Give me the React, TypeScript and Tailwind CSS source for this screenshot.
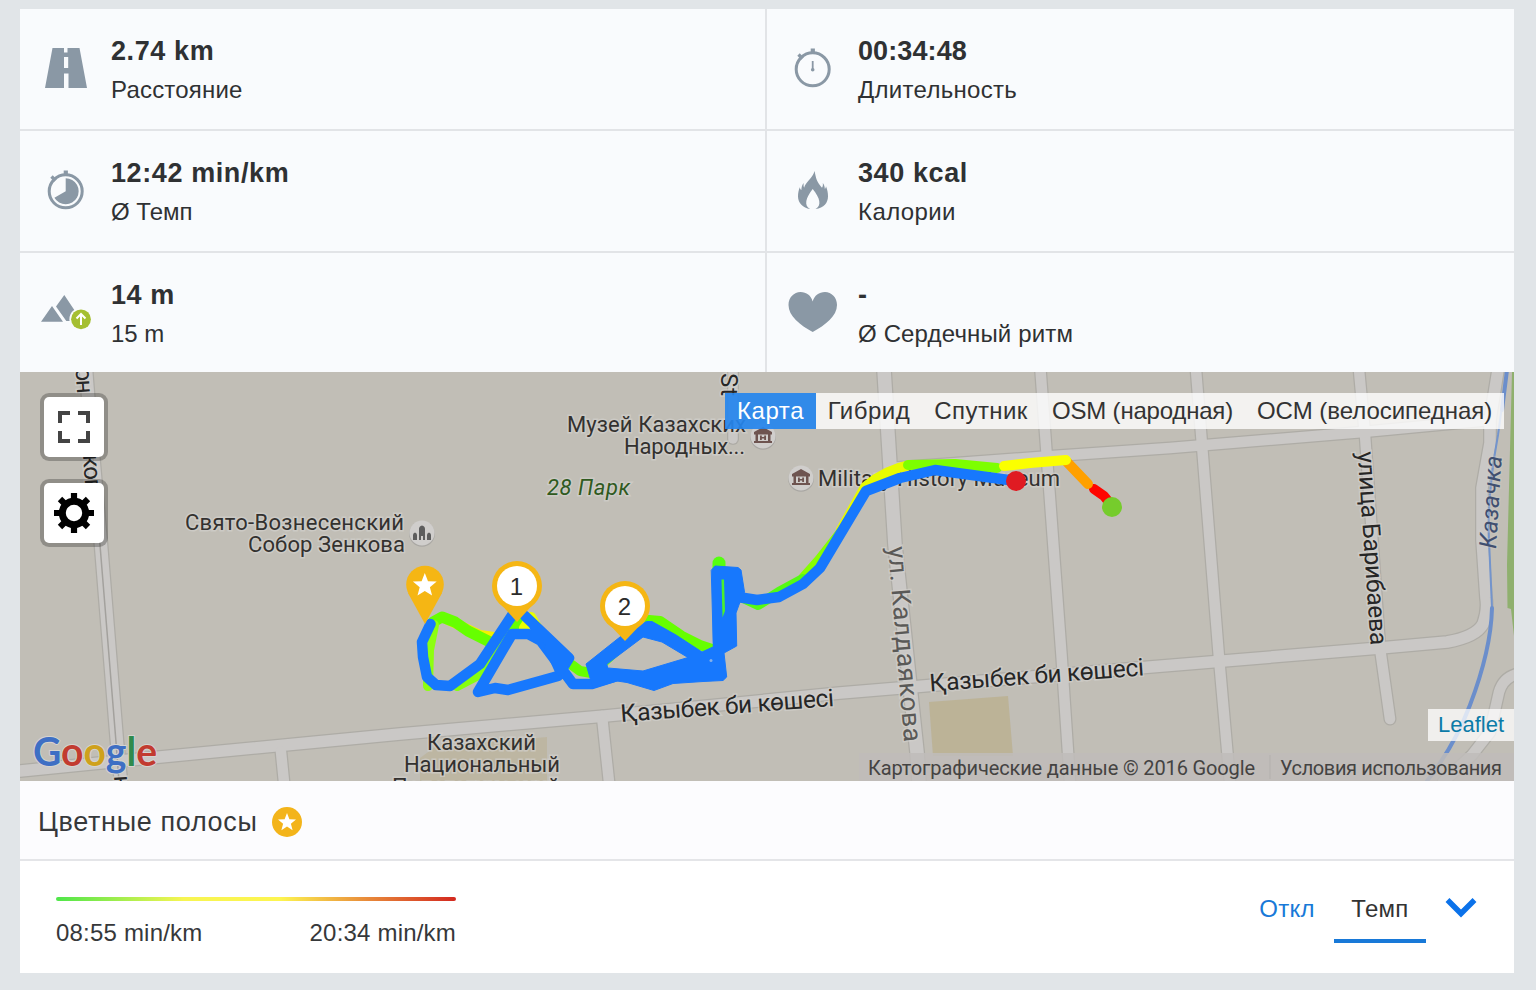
import type { ReactNode } from "react";

const SANS = "font-['Liberation_Sans',Arial,sans-serif]";
const ICON = "#8a98a5";

function starPoints(cx: number, cy: number, r: number) {
  const pts: string[] = [];
  for (let i = 0; i < 10; i++) {
    const radius = i % 2 === 0 ? r : r * 0.43;
    const a = (Math.PI / 5) * i - Math.PI / 2;
    pts.push(`${(cx + radius * Math.cos(a)).toFixed(1)},${(cy + radius * Math.sin(a)).toFixed(1)}`);
  }
  return pts.join(" ");
}

/* Every stat icon is drawn on a 91x119 canvas, the width of the icon column */
function IconBox({ children }: { children: ReactNode }) {
  return (
    <svg className="h-[119px] w-[91px] shrink-0" viewBox="0 0 91 119" fill="none">
      {children}
    </svg>
  );
}

function RoadIcon() {
  return (
    <IconBox>
      <path
        fill={ICON}
        d="M32.5 39H44v4.500h3.500V39H59.500L67 79H48.500V64.500H44V79H25zM44 48v11h4.200V48z"
        fillRule="evenodd"
      />
    </IconBox>
  );
}

function StopwatchBody() {
  return (
    <>
      <circle cx="45.700" cy="60.300" r="16.500" stroke={ICON} strokeWidth="3" />
      <rect x="43.700" y="39.500" width="4.200" height="5" fill={ICON} />
      <path d="M31.500 45.500l4 4" stroke={ICON} strokeWidth="3.400" />
    </>
  );
}

function DurationIcon() {
  return (
    <IconBox>
      <StopwatchBody />
      <path d="M45.700 52v9" stroke={ICON} strokeWidth="1.800" />
      <circle cx="45.700" cy="60.700" r="1.800" fill={ICON} />
    </IconBox>
  );
}

function PaceIcon() {
  return (
    <IconBox>
      <StopwatchBody />
      <path fill={ICON} d="M45.700 60.300V47.300a13 13 0 1 1-11.300 19.500z" />
    </IconBox>
  );
}

function FlameIcon() {
  return (
    <IconBox>
      <path
        fill={ICON}
        d="M47.500 40c1.200 5 1.500 8.500 4.500 13 1 1.500 2 2.500 3 3.800.8-1.300 1.100-2.800.8-4.800 1.700 2.200 1.800 3.800 2.100 6 .7-.6 1-1.500 1.100-2.700 1.500 4 2 6.500 2 10 0 6.500-4 11.800-12.500 12.700 6.500-3.500 4.500-11-2.800-20-7 9-9 16.500-2.600 20C36 77 31 72 31 65.500c0-3.300.6-6.300 1.800-9.200.2 1.300.7 2.300 1.500 3 .3-3 .4-4.800 2.300-7.200 0 2-.2 3.300.5 4.600C38 52 46 46.500 47.500 40z"
      />
    </IconBox>
  );
}

function ElevationIcon() {
  return (
    <IconBox>
      <path fill={ICON} d="M21 68.700L32 53l11 15.700zM36 53.500L44.300 42L55 58l-4 10H46.300z" />
      <circle cx="61" cy="66.300" r="11.600" fill="#f9fbfd" />
      <circle cx="61" cy="66.300" r="9.900" fill="#a5bf32" />
      <path d="M61 72v-10.500M56.500 65.500l4.500-4.500 4.500 4.500" stroke="#fff" strokeWidth="2" />
    </IconBox>
  );
}

function HeartIcon() {
  return (
    <IconBox>
      <path
        fill={ICON}
        d="M45.700 79C33 72 21.500 63 21.500 52c0-7.500 5.500-13 12-13 6 0 10.500 3.500 12.200 9.500C47.400 42.500 52 39 58 39c6.500 0 12 5.500 12 13 0 11-11.600 20-24.300 27z"
      />
    </IconBox>
  );
}

const stats = [
  { icon: <RoadIcon />, value: "2.74 km", label: "Расстояние", vt: "tracking-[0.6px]", lt: "tracking-[0.2px]" },
  { icon: <DurationIcon />, value: "00:34:48", label: "Длительность", vt: "tracking-[0.1px]", lt: "tracking-[0.3px]" },
  { icon: <PaceIcon />, value: "12:42 min/km", label: "Ø Темп", vt: "tracking-[0.6px]", lt: "" },
  { icon: <FlameIcon />, value: "340 kcal", label: "Калории", vt: "tracking-[0.6px]", lt: "tracking-[0.4px]" },
  { icon: <ElevationIcon />, value: "14 m", label: "15 m", vt: "tracking-[0.6px]", lt: "" },
  { icon: <HeartIcon />, value: "-", label: "Ø Сердечный ритм", vt: "", lt: "tracking-[0.15px]" },
];

function StatGrid() {
  return (
    <div className="grid h-[363px] grid-cols-[745px_747px] grid-rows-[120px_120px_119px] gap-[2px] bg-[#e2e4e7]">
      {stats.map((s) => (
        <div key={s.label} className="flex bg-[#f9fbfd]">
          {s.icon}
          <div className="pt-[22px] text-[#2f3133]">
            <div className={`whitespace-nowrap text-[27px] font-bold leading-[40px] ${s.vt}`}>{s.value}</div>
            <div className={`whitespace-nowrap text-[24px] leading-[38px] ${s.lt}`}>{s.label}</div>
          </div>
        </div>
      ))}
    </div>
  );
}

const roads = [
  { d: "M20 771L160 757L400 734L605 716L840 693L900 688L1150 667L1380 648L1447 642Q1476 637 1483 624Q1488 610 1486 598L1482 540V488L1490 443L1490 420L1498 370", w: 12 },
  { d: "M86 370L90 420L101 545L117 742L121 782", w: 13 },
  { d: "M281 752L284 782", w: 11 },
  { d: "M602 716L609 782", w: 11 },
  { d: "M884 370L895 545L917 752L919 782", w: 14 },
  { d: "M1040.500 370L1046.500 452L1061.500 655L1070 782", w: 11 },
  { d: "M1196 370L1202 445L1219 658L1230 782", w: 11 },
  { d: "M1359 370L1365 435L1380 648L1390 719", w: 11 },
  { d: "M890 468L1053 456L1170 448L1363 432L1490 420", w: 11 },
  { d: "M733 370V439", w: 10 },
  { d: "M1517 674Q1503 678 1499 692L1490 732L1472 755L1443 782", w: 11 },
];

const labels = [
  { t: "Музей Казахских", x: 567, y: 432, len: 179 },
  { t: "Народных...", x: 624, y: 454, len: 121 },
  { t: "Свято-Вознесенский", x: 185, y: 530, len: 219 },
  { t: "Собор Зенкова", x: 248, y: 552, len: 157 },
  { t: "Military History Museum", x: 818, y: 486, len: 242 },
  { t: "Казахский", x: 427, y: 750, len: 109 },
  { t: "Национальный", x: 404, y: 772, len: 156 },
  { t: "Педагогический", x: 392, y: 794, len: 168 },
];

const streets = [
  { t: "Қазыбек би көшесі", x: 621, y: 722, a: -4.3, len: 214, size: 24.5, fill: "#262626" },
  { t: "Қазыбек би көшесі", x: 930, y: 691.5, a: -4.3, len: 215, size: 24.5, fill: "#262626" },
  { t: "ул. Калдаякова", x: 888, y: 547, a: 85.3, len: 196, size: 26, fill: "#5a5957" },
  { t: "улица Барибаева", x: 1357.5, y: 452, a: 86.1, len: 194, size: 24.5, fill: "#262626" },
  { t: "St", x: 720.5, y: 373, a: 90, len: 23, size: 24, fill: "#262626" },
  { t: "он", x: 75.5, y: 368, a: 86, len: 26, size: 24, fill: "#262626" },
  { t: "ков", x: 83, y: 455, a: 86, len: 38, size: 24, fill: "#262626" },
  { t: "к", x: 114, y: 776, a: 86, len: 12, size: 24, fill: "#262626" },
];

function MuseumBadge({ x, y }: { x: number; y: number }) {
  return (
    <g transform={`translate(${x} ${y})`}>
      <circle cy="1" r="12.800" fill="#a9a7a3" />
      <circle r="12.500" fill="#d0cecc" />
      <path
        fill="#6e5450"
        fillRule="evenodd"
        d="M0-9L9-4v2.500H7.500V5H9v2H-9V5h1.500v-6.500H-9V-4zM-5-1.500V5H5v-6.500zM-3-.5h1.800v1.500h2.400V-.5H3v4.500H1.200V2.500h-2.400V4H-3z"
      />
    </g>
  );
}

function KmPin({ x, y, tip, n }: { x: number; y: number; tip: number; n: string }) {
  return (
    <g>
      <circle cx={x} cy={y} r="25" fill="#f5b614" />
      <path d={`M${x - 20} ${y + 14}L${x} ${tip}L${x + 20} ${y + 14}z`} fill="#f5b614" />
      <circle cx={x} cy={y} r="20" fill="#fff" />
      <text x={x - 0.5} y={y + 9} fontSize="24" textAnchor="middle" fill="#2b2b2b" fontFamily="Liberation Sans, Arial, sans-serif">
        {n}
      </text>
    </g>
  );
}

function Track() {
  return (
    <g fill="none" strokeWidth="10" strokeLinecap="round" strokeLinejoin="round">
      {/* pace coloured segments */}
      <path d="M1112 506L1104 496L1094 489" stroke="#ff0500" />
      <path d="M1088 484L1066 461" stroke="#ffa000" />
      <path d="M910 465Q885 470 865 487L841 530" stroke="#e8fb00" />
      <path d="M841 532L819 560L803 578" stroke="#86ff00" />
      <path d="M803 579L779 592L758 605L741 597" stroke="#55fb14" />
      <path d="M908 465L955 464L997 468" stroke="#7dff00" />
      <path d="M1004 466L1030 463L1066 460" stroke="#fbff00" />
      <path d="M448 620L480 635L494 637" stroke="#f4f000" />
      <path d="M433 622L442 617L455 622L468 631L490 642" stroke="#66ff00" strokeWidth="11" />
      <path d="M434 625L429 650L428 686" stroke="#8dff10" />
      <path d="M457 686L478 675L505 636" stroke="#86ff10" />
      <path d="M512 629L520 620" stroke="#66ff00" />
      <path d="M524 628L531 617L546 642" stroke="#eaff00" />
      <path d="M572 665L580 671L597 674" stroke="#66ff00" />
      <path d="M649 620L660 621L682 636L700 645L712 649" stroke="#66ff00" />
      <path d="M719 563V600" stroke="#55ff10" strokeWidth="13" />
      <path d="M606 664L630 642" stroke="#66ff00" strokeWidth="4" />
      {/* return leg */}
      <g stroke="#1778fd" strokeWidth="10.500">
        <path d="M1016 481L935 470L900 478L866 491L820 568L803 584L779 597L757 600L738 597" />
        <path d="M430.500 624L422 642L423 657L427 677L436 685L450 686L480 664L513 614" />
        <path d="M525 616L569 658L558 676L508 690L495 688L478 692L512 634L528 634L541 641L573 684L592 684L617 676" />
        <path d="M535 627L566 657L560 670L550 648" strokeWidth="11" />
      </g>
      <path
        fill="#1778fd"
        stroke="#1778fd"
        strokeWidth="1"
        fillRule="evenodd"
        d="M711.500 570L715 566L738 567.500L741 570L744.500 592L740 602L736 613L736.700 646L724 653L726.700 677L723 680.500L703 681.500L673 683.500L654 690.500L627 682.500L617 681L593 688L586 664L620 637L646.500 621.500L652 621.500L676 635L702 652L713 647zM607 664L643 637L662 642L688 657.500L643 671L608 668z"
      />
      <path d="M721.500 579.500L724 579.500L725 611L722.500 617.500z" fill="#4cf02c" />
      <circle cx="711" cy="660.500" r="1.500" fill="#83b0ea" />
    </g>
  );
}

function MapCanvas() {
  return (
    <svg className="block h-full w-full" viewBox="20 372 1494 409">
      <rect x="20" y="372" width="1494" height="409" fill="#c1beb6" />
      <path d="M929 702L1008 696L1013 756H933z" fill="#bbb194" fillOpacity="0.900" />
      <path d="M420 758L435 747L547 737V782H420z" fill="#bbb194" fillOpacity="0.600" />
      <path d="M1512 372L1507 565L1507.500 608L1511 609L1514 636V372z" fill="#8fb06e" />

      <g fill="none" strokeLinecap="round" strokeLinejoin="round">
        {roads.map((r) => (
          <path key={r.d} d={r.d} stroke="#aeaca6" strokeWidth={r.w + 2} />
        ))}
        {roads.map((r) => (
          <path key={r.d} d={r.d} stroke="#cac8c6" strokeWidth={r.w - 0.5} />
        ))}
        <path d="M90 420L100 545L116 742L119 782" stroke="#a3a19d" strokeWidth="1.500" />
        <path d="M1507 370L1498 435Q1487 495 1489 540L1492 608" stroke="#7394cc" strokeWidth="2" />
        <path d="M1507 370L1502 410M1492 608Q1491 650 1470 705Q1455 745 1427 781" stroke="#6b8ecb" strokeWidth="4" />
      </g>

      <MuseumBadge x={763} y={436} />
      <MuseumBadge x={801} y={478} />
      <circle cx="422" cy="534" r="12.800" fill="#a9a7a3" />
      <circle cx="422" cy="533" r="12.500" fill="#d0cecc" />
      <path
        fill="#5d5d5d"
        d="M419 540v-11q0-3 3-3.500q3 .5 3 3.500v11h-2v-4h-2v4zM413 540v-5q0-2 2-2.500q2 .5 2 2.500v5zM427 540v-5q0-2 2-2.500q2 .5 2 2.500v5z"
      />

      <g fontFamily="Roboto, sans-serif" fontSize="22" fill="#33312f" stroke="#d2d0cc" strokeWidth="3" strokeOpacity="0.700" paintOrder="stroke">
        {labels.map((l) => (
          <text key={l.t} x={l.x} y={l.y} textLength={l.len}>
            {l.t}
          </text>
        ))}
        <text x="547" y="495" textLength="83" fontStyle="italic" fill="#2f5a20">
          28 Парк
        </text>
        {streets.map((s, i) => (
          <text key={i} fontSize={s.size} fill={s.fill} textLength={s.len} transform={`translate(${s.x} ${s.y}) rotate(${s.a})`}>
            {s.t}
          </text>
        ))}
        <text fontSize="24" fontStyle="italic" fill="#404f70" strokeOpacity="0.300" textLength="93" transform="translate(1496 549) rotate(-86.500)">
          Казачка
        </text>
      </g>

      <text
        x="33"
        y="766"
        textLength="124"
        lengthAdjust="spacingAndGlyphs"
        fontFamily="Lato, sans-serif"
        fontSize="41"
        fontWeight="700"
        stroke="#d6d4d0"
        strokeWidth="2"
        paintOrder="stroke"
      >
        <tspan fill="#3e6fc4">G</tspan>
        <tspan fill="#c23b30">o</tspan>
        <tspan fill="#cfa11c">o</tspan>
        <tspan fill="#3e6fc4">g</tspan>
        <tspan fill="#2f8a4c">l</tspan>
        <tspan fill="#c23b30">e</tspan>
      </text>

      <Track />
      <circle cx="1016" cy="481" r="10" fill="#e01b22" />
      <circle cx="1112" cy="507" r="10" fill="#76cc2c" />

      <circle cx="425" cy="584.500" r="18.800" fill="#f5b614" />
      <path d="M408 593L425 624L442 593z" fill="#f5b614" />
      <polygon points={starPoints(424.8, 585.5, 12.5)} fill="#fff" />
      <KmPin x={517} y={586} tip={622} n="1" />
      <KmPin x={625} y={606} tip={641} n="2" />

      <rect x="859" y="753" width="655" height="28" fill="#bfbcba" fillOpacity="0.850" />
      <path d="M1270 755V779" stroke="#b3b0ad" />
      <g fontFamily="Roboto, sans-serif" fontSize="20" fill="#444342">
        <text x="868" y="775" textLength="387">
          Картографические данные © 2016 Google
        </text>
        <text x="1280" y="775" textLength="222">
          Условия использования
        </text>
      </g>
    </svg>
  );
}

const layers = [
  { name: "Карта", cls: "w-[91px] bg-[#2585ee]/92 text-white tracking-[0.6px]" },
  { name: "Гибрид", cls: "w-[106px] bg-white/80 text-[#333] tracking-[0.5px]" },
  { name: "Спутник", cls: "w-[118px] bg-white/80 text-[#333] tracking-[0.4px]" },
  { name: "OSM (народная)", cls: "w-[205px] bg-white/80 text-[#333] tracking-[-0.2px]" },
  { name: "OCM (велосипедная)", cls: "w-[259px] bg-white/80 text-[#333] tracking-[-0.05px]" },
];

function MapPanel() {
  return (
    <div className="relative h-[409px] overflow-hidden bg-[#c1beb6]">
      <MapCanvas />

      <div className="absolute left-[20px] top-[21px] flex flex-col gap-[18px]">
        <button className="flex size-[68px] items-center justify-center rounded-[9px] border-4 border-black/25 bg-white bg-clip-padding">
          <svg className="size-8" viewBox="0 0 32 32" fill="none" stroke="#444" strokeWidth="4">
            <path d="M2 12V2h10M20 2h10v10M30 20v10H20M12 30H2V20" />
          </svg>
        </button>
        <button className="flex size-[68px] items-center justify-center rounded-[9px] border-4 border-black/25 bg-white bg-clip-padding">
          <svg className="size-10" viewBox="-20 -20 40 40" fill="none" stroke="#000">
            <circle r="11.700" strokeWidth="7" />
            <path d="M0-20V-13M0 20V13M-20 0H-13M20 0H13M-14-14L-10-10M14 14L10 10M14-14L10-10M-14 14L-10 10" strokeWidth="6.200" />
          </svg>
        </button>
      </div>

      <div className="absolute right-[10px] top-[21px] flex h-[36px] text-[24px] leading-[36px]">
        {layers.map((l) => (
          <div key={l.name} className={`whitespace-nowrap text-center ${l.cls}`}>
            {l.name}
          </div>
        ))}
      </div>

      <div className="absolute right-0 top-[337px] h-[32px] w-[86px] bg-white/75 pl-[10px] text-[22px] leading-[32px] text-[#0b7ba8]">
        Leaflet
      </div>
    </div>
  );
}

function LegendPanel() {
  return (
    <div>
      <div className="flex h-[80px] items-center border-b-2 border-[#e4e5e8] bg-[#fcfcfe] pl-[18px] pt-[4px]">
        <span className="w-[234px] whitespace-nowrap text-[27px] tracking-[0.65px] text-[#36383a]">Цветные полосы</span>
        <svg className="size-[30px]" viewBox="0 0 30 30">
          <circle cx="15" cy="15" r="15" fill="#f3b41a" />
          <polygon points={starPoints(15, 15.5, 9.5)} fill="#fff" />
        </svg>
      </div>

      <div className="flex h-[112px] justify-between bg-white pl-[36px] pr-[36px]">
        <div className="w-[400px] pt-[36px] text-[24px] text-[#36383a]">
          <div className="h-1 rounded-full bg-[linear-gradient(90deg,#4ee64a_0%,#f7f552_32%,#fdf550_56%,#e8893a_78%,#d3281f_100%)]" />
          <div className="mt-[14px] flex justify-between leading-[36px] tracking-[0.2px]">
            <span>08:55 min/km</span>
            <span>20:34 min/km</span>
          </div>
        </div>

        <div className="flex text-[24px] leading-[36px]">
          <button className="h-[82px] w-[94px] pt-[14px] tracking-[0.3px] text-[#1879d8]">Откл</button>
          <button className="h-[82px] w-[92px] border-b-4 border-[#1879d8] pt-[18px] tracking-[0.3px] text-[#333]">Темп</button>
          <svg className="ml-[19px] mr-px mt-[36px] h-[22px] w-[32px]" viewBox="0 0 32 22" fill="none">
            <path d="M2.500 3L16 16.500L29.500 3" stroke="#0b72ea" strokeWidth="5.500" />
          </svg>
        </div>
      </div>
    </div>
  );
}

export default function App() {
  return (
    <div className={`h-[990px] w-[1536px] overflow-hidden bg-[#e1e5e8] pl-[20px] pt-[9px] ${SANS}`}>
      <div className="w-[1494px]">
        <StatGrid />
        <MapPanel />
        <LegendPanel />
      </div>
    </div>
  );
}
